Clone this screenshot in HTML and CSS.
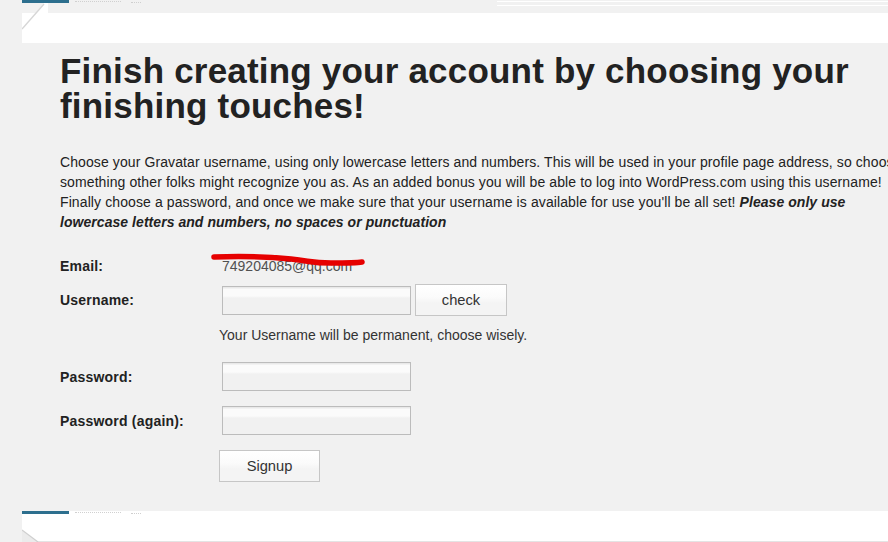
FILE: index.html
```html
<!DOCTYPE html>
<html>
<head>
<meta charset="utf-8">
<link rel="stylesheet" href="styles.css">
</head>
<body>
<div class="page">
  <div class="top-strip">
    <span class="blue-bar"></span>
    <span class="faint-text"></span>
    <span class="faint-glyph"></span>
    <span class="top-lines"></span>
  </div>
  <div class="top-band">
    <svg class="curl-top" width="26" height="32" viewBox="0 0 26 32">
      <path d="M22 3 L0 29 L0 32 L26 32 L26 3 Z" fill="#fff"/>
      <line x1="22" y1="4" x2="0" y2="29" stroke="#d6d6d6" stroke-width="1.4"/>
    </svg>
  </div>

  <div class="content">
    <h1 class="title">Finish creating your account by choosing your finishing touches!</h1>
    <p class="intro">Choose your Gravatar username, using only lowercase letters and numbers. This will be used in your profile page address, so choose<br>something other folks might recognize you as. As an added bonus you will be able to log into WordPress.com using this username!<br>Finally choose a password, and once we make sure that your username is available for use you'll be all set! <strong class="emph">Please only use<br>lowercase letters and numbers, no spaces or punctuation</strong></p>

    <div class="form">
      <div class="row row-email">
        <span class="label">Email:</span>
        <span class="field email-value">749204085@qq.com
          <svg class="scribble" width="160" height="16" viewBox="0 0 160 16">
            <path d="M3 4 C 30 3, 60 4, 80 6 S 100 10, 120 10 S 145 10, 151 9" fill="none" stroke="#e60000" stroke-width="5.5" stroke-linecap="round"/>
          </svg>
        </span>
      </div>
      <div class="row row-user">
        <span class="label">Username:</span>
        <span class="field field-user">
          <input class="text-input" type="text">
          <button class="btn btn-check" type="button">check</button>
        </span>
      </div>
      <div class="row row-hint">
        <span class="label"></span>
        <span class="field hint">Your Username will be permanent, choose wisely.</span>
      </div>
      <div class="row row-pass">
        <span class="label">Password:</span>
        <span class="field"><input class="text-input" type="password"></span>
      </div>
      <div class="row row-pass2">
        <span class="label">Password (again):</span>
        <span class="field"><input class="text-input" type="password"></span>
      </div>
      <div class="row row-submit">
        <span class="label"></span>
        <span class="field field-btn"><button class="btn btn-signup" type="button">Signup</button></span>
      </div>
    </div>
  </div>

  <div class="bottom-band">
    <div class="bottom-head">
      <span class="blue-bar"></span>
      <span class="faint-text"></span>
      <span class="faint-glyph"></span>
    </div>
    <svg class="curl-bottom" width="24" height="22" viewBox="0 0 24 22">
      <path d="M0 10 L16 22 L0 22 Z" fill="#ebebeb"/>
      <line x1="0" y1="10" x2="16" y2="22" stroke="#cfcfcf" stroke-width="1.2"/>
    </svg>
  </div>
</div>
</body>
</html>
```

FILE: styles.css
```css
html, body {
  margin: 0;
  padding: 0;
}
body {
  background: #f1f1f1;
  font-family: "Liberation Sans", Arial, sans-serif;
  color: #222;
  width: 888px;
  height: 542px;
  overflow: hidden;
}
.page {
  display: flex;
  flex-direction: column;
  height: 542px;
  width: 888px;
  overflow: hidden;
}
.top-strip {
  height: 13px;
  display: flex;
  align-items: flex-start;
  padding-left: 22px;
  position: relative;
}
.blue-bar {
  display: block;
  width: 47px;
  height: 3px;
  background: #2d6f8e;
}
.faint-text {
  display: block;
  width: 46px;
  margin-left: 6px;
  margin-top: 1px;
  border-top: 1px dotted #d0d0d0;
}
.faint-glyph {
  display: block;
  width: 10px;
  height: 4px;
  margin-left: 10px;
  margin-top: 2px;
  border-top: 1px dotted #cfcfcf;
}
.top-lines {
  position: absolute;
  left: 497px;
  right: 0;
  top: 1px;
  height: 3px;
  border-top: 1px solid #fff;
  border-bottom: 1px solid #fff;
}
.top-band {
  margin-left: 22px;
  height: 30px;
  background: #fff;
  position: relative;
}
.curl-top {
  position: absolute;
  left: 0;
  top: -13px;
  display: block;
}
.content {
  padding-left: 60px;
  flex: 1;
}
.title {
  margin: 10px 0 0 0;
  font-size: 35px;
  line-height: 35px;
  letter-spacing: 0.2px;
  font-weight: bold;
  color: #222;
  width: 820px;
}
.intro {
  margin: 29px 0 0 0;
  white-space: nowrap;
  font-size: 14px;
  line-height: 20px;
  letter-spacing: 0.1px;
  color: #222;
}
.emph {
  font-style: italic;
  font-weight: bold;
  letter-spacing: 0.05px;
}
.form {
  margin-top: 20px;
  font-size: 14px;
}
.row {
  display: grid;
  grid-template-columns: 159px auto;
  align-items: center;
}
.label {
  font-weight: bold;
  color: #222;
  line-height: 20px;
  letter-spacing: 0.2px;
}
.field {
  display: flex;
  align-items: center;
}
.row-email {
  height: 28px;
}
.email-value {
  margin-left: 3px;
  color: #505050;
  position: relative;
  line-height: 20px;
}
.scribble {
  position: absolute;
  left: -11px;
  top: -3px;
}
.row-user {
  margin-top: 4px;
  height: 32px;
}
.field-user {
  align-items: flex-end;
  height: 32px;
}
.text-input {
  margin: 0 0 0 3px;
  box-sizing: border-box;
  width: 189px;
  height: 29px;
  border: 1px solid #bcbcbc;
  background: linear-gradient(#e9e9e9 0, #e9e9e9 1px, #fbfbfb 2px, #fbfbfb 9px, #f1f1f1 11px, #f1f1f1 100%);
  padding: 0;
  outline: none;
}
.field-user .text-input {
  margin-bottom: 1px;
}
.btn {
  box-sizing: border-box;
  border: 1px solid #c6c6c6;
  background: linear-gradient(#ffffff 0, #fbfbfb 40%, #f4f4f4 60%, #f4f4f4 100%);
  font-family: "Liberation Sans", Arial, sans-serif;
  font-size: 14.7px;
  color: #333;
  padding: 0;
  cursor: pointer;
}
.btn-check {
  width: 92px;
  height: 32px;
  margin-left: 4px;
}
.row-hint {
  margin-top: 9px;
  height: 20px;
}
.hint {
  color: #333;
  line-height: 20px;
}
.row-pass {
  margin-top: 17px;
  height: 29px;
}
.row-pass2 {
  margin-top: 15px;
  height: 29px;
}
.row-submit {
  margin-top: 15px;
  height: 32px;
}
.btn-signup {
  width: 101px;
  height: 32px;
}
.bottom-band {
  margin-left: 22px;
  height: 31px;
  background: #fff;
  position: relative;
  flex: none;
  border-bottom: 1px solid #e4e4e4;
  box-sizing: border-box;
}
.bottom-head {
  display: flex;
  align-items: flex-start;
}
.curl-bottom {
  position: absolute;
  left: 0;
  bottom: -1px;
  display: block;
}
```
